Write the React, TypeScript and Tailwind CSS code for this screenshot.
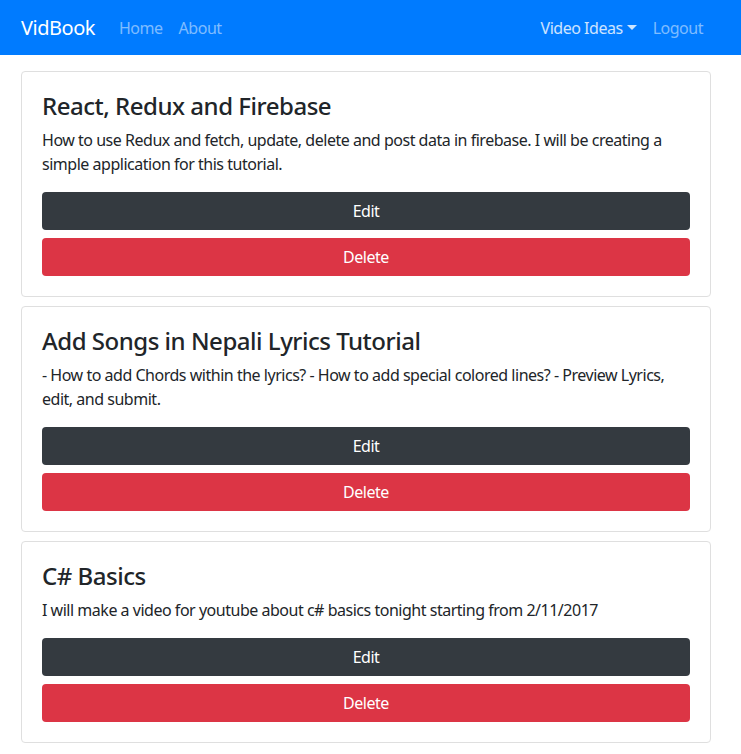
import React from "react";

type Idea = { title: string; details: string };

const ideas: Idea[] = [
  {
    title: "React, Redux and Firebase",
    details:
      "How to use Redux and fetch, update, delete and post data in firebase. I will be creating a simple application for this tutorial.",
  },
  {
    title: "Add Songs in Nepali Lyrics Tutorial",
    details:
      "- How to add Chords within the lyrics? - How to add special colored lines? - Preview Lyrics, edit, and submit.",
  },
  {
    title: "C# Basics",
    details: "I will make a video for youtube about c# basics tonight starting from 2/11/2017",
  },
];

function Navbar() {
  return (
    <nav className="h-[55px] bg-[#007bff] flex items-center pl-[21px] pr-[30px]">
      <a className="text-white text-[20px] leading-[30px] mr-4">VidBook</a>
      <a className="px-2 text-white/50 text-base leading-6">Home</a>
      <a className="px-2 text-white/50 text-base leading-6">About</a>
      <div className="ml-auto flex items-center">
        <a className="px-2 text-white/80 text-base leading-6 flex items-center">
          Video Ideas
          <span className="ml-[4px] inline-block w-0 h-0 border-x-[5px] border-x-transparent border-t-[5px] border-t-white/80" />
        </a>
        <a className="px-2 text-white/50 text-base leading-6">Logout</a>
      </div>
    </nav>
  );
}

function IdeaCard({ idea }: { idea: Idea }) {
  return (
    <div className="border border-[#dfdfdf] rounded-[4px] bg-white p-5 mb-[9px]">
      <h4 className="text-[24px] leading-[28px] font-medium text-[#212529] mb-2">{idea.title}</h4>
      <p className="text-base leading-6 text-[#212529] mb-4">{idea.details}</p>
      <button className="w-full h-[38px] rounded-[4px] bg-[#343a40] text-white text-base mb-2">Edit</button>
      <button className="w-full h-[38px] rounded-[4px] bg-[#dc3545] text-white text-base">Delete</button>
    </div>
  );
}

export default function App() {
  return (
    <div className="min-h-screen bg-white font-['Noto_Sans',sans-serif] tracking-[-0.03em]">
      <Navbar />
      <main className="pl-[21px] pr-[30px] pt-4">
        {ideas.map((idea) => (
          <IdeaCard key={idea.title} idea={idea} />
        ))}
      </main>
    </div>
  );
}
